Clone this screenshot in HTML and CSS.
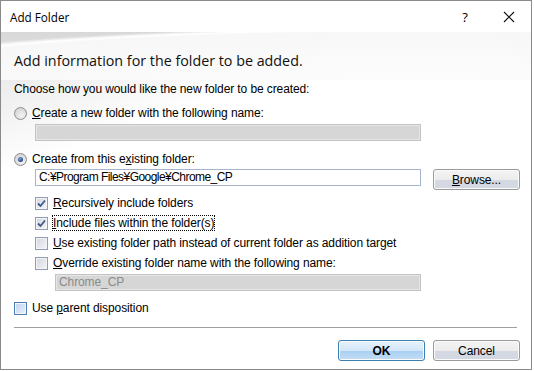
FILE: index.html
```html
<html>
  <head>
    <link rel="stylesheet" href="styles.css">
  </head>
  <body>
    <div class="window">
      <div class="titlebar">
        <span class="title">Add Folder</span>
        <span class="help">?</span>
        <span class="close">
          <svg width="12" height="12" viewBox="0 0 12 12">
            <path d="M1 1L11 11M11 1L1 11" stroke="#111" stroke-width="1.1"/>
          </svg>
        </span>
      </div>

      <div class="banner">
        <h1>Add information for the folder to be added.</h1>
      </div>

      <div class="content">
        <p class="intro">Choose how you would like the new folder to be created:</p>

        <!-- New folder option -->
        <div class="option radio-row">
          <span class="radio"></span>
          <span><u>C</u>reate a new folder with the following name:</span>
        </div>
        <div class="field disabled new-name"></div>

        <!-- Existing folder option -->
        <div class="option radio-row existing">
          <span class="radio checked"></span>
          <span>Create from this e<u>x</u>isting folder:</span>
        </div>
        <div class="path-row">
          <div class="field path">C:¥Program Files¥Google¥Chrome_CP</div>
          <button class="btn browse"><u>B</u>rowse...</button>
        </div>

        <div class="checks">
          <div class="option check-row">
            <span class="check checked">
              <svg width="9" height="9" viewBox="0 0 9 9"><path d="M1 4.5L3.5 7L8 1.5" stroke="#3f5a8c" stroke-width="1.8" fill="none"/></svg>
            </span>
            <span><u>R</u>ecursively include folders</span>
          </div>
          <div class="option check-row">
            <span class="check checked">
              <svg width="9" height="9" viewBox="0 0 9 9"><path d="M1 4.5L3.5 7L8 1.5" stroke="#3f5a8c" stroke-width="1.8" fill="none"/></svg>
            </span>
            <span class="focused"><u>I</u>nclude files within the folder(s)</span>
          </div>
          <div class="option check-row">
            <span class="check"></span>
            <span><u>U</u>se existing folder path instead of current folder as addition target</span>
          </div>
          <div class="option check-row">
            <span class="check"></span>
            <span><u>O</u>verride existing folder name with the following name:</span>
          </div>
          <div class="field disabled override">Chrome_CP</div>
        </div>

        <div class="option check-row parent">
          <span class="check hover"></span>
          <span>Use <u>p</u>arent disposition</span>
        </div>
      </div>

      <div class="footer">
        <div class="separator"></div>
        <div class="buttons">
          <button class="btn default">OK</button>
          <button class="btn">Cancel</button>
        </div>
      </div>
    </div>
  </body>
</html>
```

FILE: styles.css
```css
* {
  box-sizing: border-box;
  margin: 0;
  padding: 0;
}

body {
  background: #fff;
  font-family: 'Liberation Sans', sans-serif;
  font-size: 12px;
  letter-spacing: -0.1px;
  color: #000;
}

.window {
  width: 532px;
  height: 370px;
  border: 1px solid #8a8a8a;
  background: #fff;
}

.titlebar {
  height: 31px;
  display: flex;
  align-items: center;
  padding-left: 9px;
  font-family: 'Open Sans', sans-serif;
  font-size: 11.7px;
  letter-spacing: 0;
}

.title {
  flex: 1;
}

.help {
  width: 20px;
  font-size: 13px;
  margin-right: 28px;
  text-align: center;
}

.close {
  width: 12px;
  height: 12px;
  margin-right: 16px;
  display: flex;
}

/* header band with the light swoosh */
.banner {
  height: 48px;
  padding: 18px 0 0 13px;
  background:
    radial-gradient(ellipse 980px 90px at 78% 108%, #fdfdfd 0, #f7f7f7 58%, #ffffff 60%, rgba(255,255,255,0) 63%),
    linear-gradient(#d8d8d8, #ebebeb);
}

h1 {
  font-family: 'Open Sans', sans-serif;
  font-size: 14.3px;
  font-weight: 400;
  letter-spacing: 0;
  color: #111;
  line-height: 22px;
}

.content {
  padding: 1px 0 0 13px;
  background: linear-gradient(160deg, #ececec 0, #fff 90px);
}

.intro {
  line-height: 16px;
}

.option {
  display: flex;
  align-items: center;
  gap: 5px;
}

.radio-row {
  height: 16px;
  margin-top: 8px;
}

.radio-row.existing {
  margin-top: 10px;
}

.radio {
  width: 13px;
  height: 13px;
  border-radius: 50%;
  border: 1px solid #8c8c8c;
  background: radial-gradient(circle at 60% 70%, #f4f4f4 0, #d7d7d7 70%);
  display: flex;
  align-items: center;
  justify-content: center;
}

.radio.checked::after {
  content: '';
  width: 5px;
  height: 5px;
  border-radius: 50%;
  background: radial-gradient(circle at 40% 35%, #7fa0d8 0, #1a3a72 80%);
}

.field {
  height: 17px;
  border: 1px solid #a5b5cf;
  background: #fff;
  padding: 0 3px;
  line-height: 15px;
}

.field.disabled {
  border-color: #c3c3c3;
  background: #d6d6d6;
  box-shadow: inset 0 0 0 1px #e6e6e6;
  color: #8a8a8a;
}

.new-name {
  width: 386px;
  margin: 3px 0 0 21px;
}

.path-row {
  display: flex;
  gap: 12px;
  margin: 2px 0 0 21px;
}

.path {
  width: 386px;
  letter-spacing: -0.55px;
}

.btn {
  width: 87px;
  height: 21px;
  border: 1px solid #9a9a9a;
  border-radius: 3px;
  background: linear-gradient(#f4f4f4 0, #ececec 50%, #d3d8e3 50%, #d3d8e3 100%);
  font-family: 'Liberation Sans', sans-serif;
  font-size: 12px;
  letter-spacing: -0.1px;
  color: #000;
  box-shadow: inset 0 0 0 1px #fbfbfb;
}

.checks {
  margin: 3px 0 0 21px;
}

.check-row {
  height: 20px;
}

.check {
  width: 13px;
  height: 13px;
  border: 1px solid #8f9db4;
  background: linear-gradient(135deg, #d1d6de 0, #f4f5f7 100%);
  box-shadow: inset 0 0 0 1px #f5f5f5;
  display: flex;
  align-items: center;
  justify-content: center;
}

.check.hover {
  border-color: #4f7db8;
  background: linear-gradient(135deg, #bfd3ec 0, #eaf1fa 100%);
}

.focused {
  outline: 1px dotted #000;
  outline-offset: 0;
}

.override {
  width: 366px;
  margin: 1px 0 0 20px;
}

.parent {
  margin-top: 7px;
}

.footer {
  padding: 0 11px 0 13px;
}

.separator {
  height: 1px;
  background: #a0a0a0;
  margin-top: 9px;
  width: 503px;
}

.buttons {
  display: flex;
  justify-content: flex-end;
  gap: 8px;
  margin-top: 12px;
}

.btn.default {
  border-color: #3c7fb1;
  background: linear-gradient(#e8f2fb 0, #d3e6f8 50%, #a9cff2 50%, #c4ddf5 100%);
  font-weight: bold;
}
```
